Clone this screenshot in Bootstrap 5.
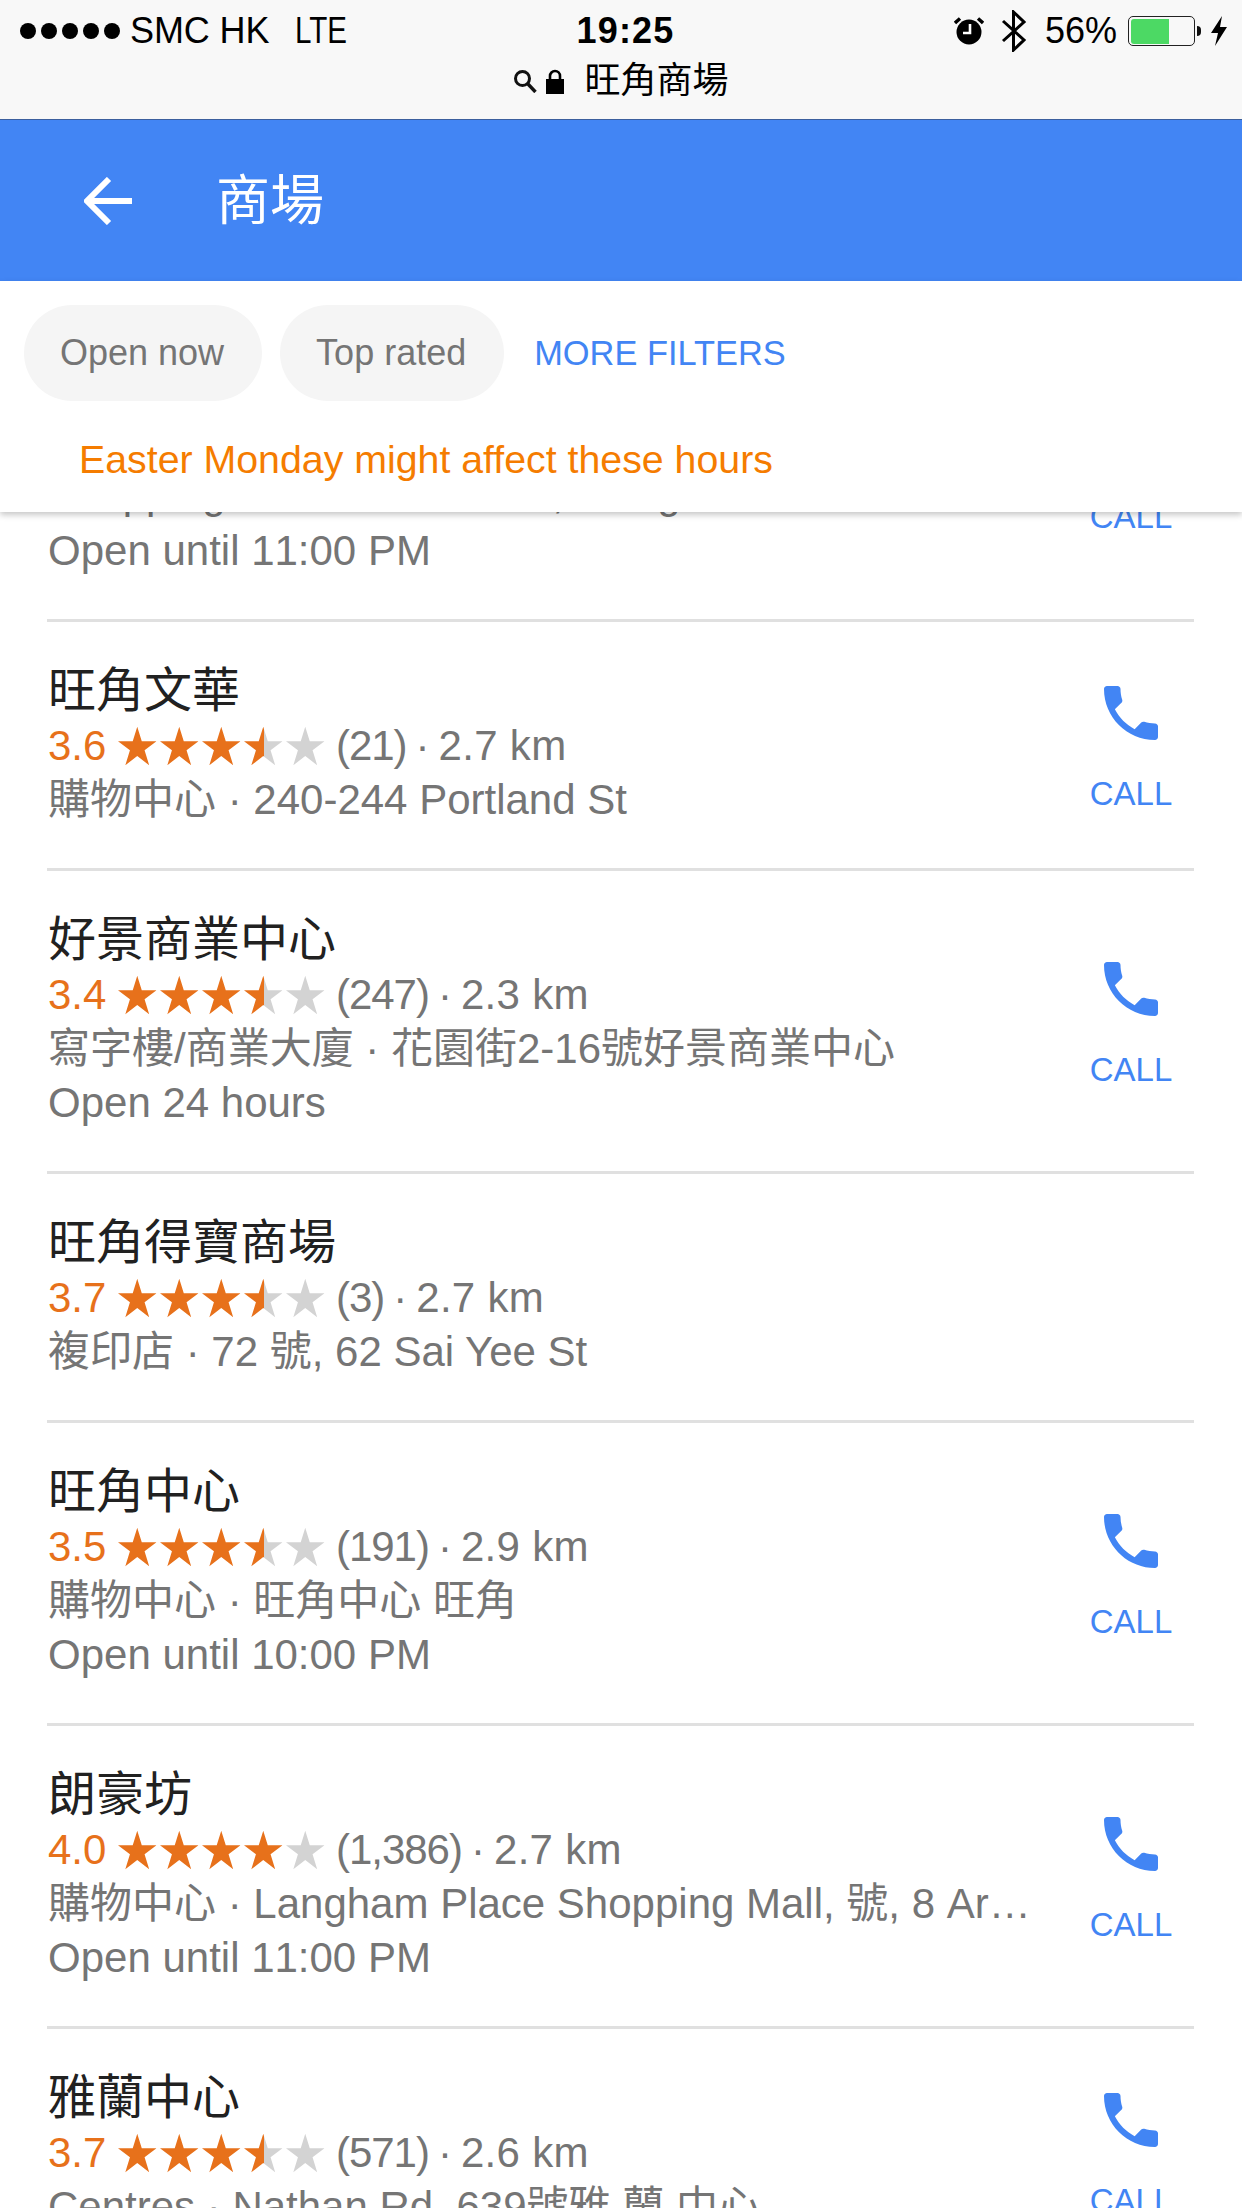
<!DOCTYPE html>
<html lang="zh-Hant">
<head>
<meta charset="utf-8">
<title>商場</title>
<link href="https://cdn.jsdelivr.net/npm/bootstrap@5.3.0/dist/css/bootstrap.min.css" rel="stylesheet">
<style>
html,body{margin:0;background:#fff}
.phone-screen{width:1242px;height:2208px;overflow:hidden;font-family:"Liberation Sans","Noto Sans CJK TC",sans-serif;color:#757575;background:#fff}
.ios-bar{height:120px;background:#f8f8f8;border-bottom:1px solid #3b5f9e;color:#000;font-size:36px;line-height:40px}
.ios-top{height:62px;padding:0 0 0 20px}
.ios-side{flex:1 1 0;min-width:0}
.ios-dot{width:16px;height:16px;border-radius:50%;background:#000;margin-right:5px}
.ios-carrier{margin-left:5px;letter-spacing:-.1px}
.ios-net{margin-left:26px;display:inline-block;transform:scaleX(.82);transform-origin:left center}
.ios-time{font-weight:700;letter-spacing:1.2px;margin-left:3px}
.ios-right{padding-right:14px}
.ios-bt{margin-left:16px}
.ios-pct{margin-left:18px}
.alarm-shift{margin-right:.5px}
.batt{width:67px;height:30px;border:1.5px solid #222;border-radius:5px;padding:1.5px;margin-left:11px}
.batt-fill{width:38px;height:100%;background:#4cd964;border-radius:3px 0 0 3px}
.batt-nub{width:4px;height:10px;background:#111;border-radius:0 4px 4px 0;margin:0 9px 0 2px}
.ios-url{height:40px;margin-top:-1px;line-height:40px;padding-right:3px}
.url-text{margin-left:20px;width:142px;white-space:nowrap}
.app-head{height:161px;background:#4285f4;color:#fff;padding-left:84px}
.app-title{font-size:54px;margin-left:84px;line-height:60px}
.filter-panel{height:231px;background:#fff;box-shadow:0 3px 6px rgba(0,0,0,.22);position:relative;z-index:2;padding:24px 0 0 24px}
.chip-row{gap:18px}
.chip-pill{height:96px;border-radius:48px;background:#f5f5f5;color:#757575;font-size:36px;line-height:96px;padding:0 38px 0 36px}
.more-link{font-size:34.4px;color:#4285f4;text-decoration:none;margin-left:12px;line-height:92px;white-space:nowrap}
.notice-text{font-size:39.3px;color:#f57c00;line-height:44px;margin:36px 0 0 55px;white-space:nowrap}
.place-list{margin-top:-48px;border-radius:0}
.place-list .place-row{margin:0 48px 0 47px;padding:41px 0 41px;border:0;border-bottom:3px solid #e0e0e0;border-radius:0;color:#757575;font-size:42px;line-height:54px;background:#fff}
.place-list .place-peek{padding-top:0}
.peek-line{line-height:60px}
.place-main{flex:1 1 0;min-width:0;padding:0 20px 0 1px}
.place-name{font-size:48px;line-height:56px;color:#212121;white-space:nowrap}
.place-score{color:#e7711b}
.place-stars{margin:0 11px 0 12px;gap:3.5px}
.place-stars svg{display:block;width:38.5px;height:40px}
.place-count{letter-spacing:-1px}
.mid-dot{margin:0 9px}
.place-dist{letter-spacing:.3px}
.place-meta{white-space:nowrap;font-kerning:none}
.call-box{width:130px;margin-right:-2px;color:#4285f4;font-size:33px;line-height:40px;text-decoration:none}
.call-box svg{display:block;width:72px;height:72px;margin:0 0 25px}
.call-peek{margin-bottom:41px}
</style>
</head>
<body>
<svg width="0" height="0" class="d-block position-absolute" aria-hidden="true">
  <defs>
    <linearGradient id="halfgrad" x1="0" x2="1" y1="0" y2="0">
      <stop offset=".52" stop-color="#e7711b"/><stop offset=".52" stop-color="#d3d3d3"/>
    </linearGradient>
    <symbol id="st-full" viewBox="0 0 40 40"><polygon fill="#e7711b" points="20,0 24.7,15 40,15 27.6,24.5 32.4,40 20,30.5 7.6,40 12.4,24.5 0,15 15.3,15"/></symbol>
    <symbol id="st-half" viewBox="0 0 40 40"><polygon fill="url(#halfgrad)" points="20,0 24.7,15 40,15 27.6,24.5 32.4,40 20,30.5 7.6,40 12.4,24.5 0,15 15.3,15"/></symbol>
    <symbol id="st-none" viewBox="0 0 40 40"><polygon fill="#d3d3d3" points="20,0 24.7,15 40,15 27.6,24.5 32.4,40 20,30.5 7.6,40 12.4,24.5 0,15 15.3,15"/></symbol>
    <symbol id="ph" viewBox="0 0 24 24"><path fill="#4285f4" d="M6.62 10.79c1.44 2.83 3.76 5.14 6.59 6.59l2.2-2.2c.27-.27.67-.36 1.02-.24 1.12.37 2.33.57 3.57.57.55 0 1 .45 1 1V20c0 .55-.45 1-1 1-9.39 0-17-7.61-17-17 0-.55.45-1 1-1h3.5c.55 0 1 .45 1 1 0 1.25.2 2.45.57 3.57.11.35.03.74-.25 1.02l-2.2 2.2z"/></symbol>
  </defs>
</svg>
<div class="phone-screen">
  <div class="ios-bar">
    <div class="ios-top d-flex align-items-center">
      <div class="ios-side d-flex align-items-center">
        <span class="ios-dot"></span><span class="ios-dot"></span><span class="ios-dot"></span><span class="ios-dot"></span><span class="ios-dot"></span>
        <span class="ios-carrier">SMC HK</span><span class="ios-net">LTE</span>
      </div>
      <div class="ios-time">19:25</div>
      <div class="ios-side ios-right d-flex align-items-center justify-content-end">
        <svg class="alarm-shift" width="30" height="28" viewBox="0 0 30 28"><circle cx="15" cy="15" r="12.5" fill="#000"/><path d="M1 6 L6 1.5 M29 6 L24 1.5" stroke="#000" stroke-width="3.4"/><path d="M16 7v9h-7" fill="none" stroke="#fff" stroke-width="2.6"/></svg>
        <svg class="ios-bt" width="26" height="42" viewBox="0 0 26 42"><path d="M2 11 L23 30 L12.5 40 V2 L23 12 L2 31" fill="none" stroke="#000" stroke-width="3"/></svg>
        <span class="ios-pct">56%</span>
        <div class="batt"><div class="batt-fill"></div></div>
        <div class="batt-nub"></div>
        <svg width="18" height="30" viewBox="0 0 18 30"><polygon fill="#000" points="12,0 1,17 8,17 5,30 17,11 10,11"/></svg>
      </div>
    </div>
    <div class="ios-url d-flex align-items-center justify-content-center">
      <svg width="24" height="24" viewBox="0 0 24 24"><circle cx="9.5" cy="9.5" r="7" fill="none" stroke="#111" stroke-width="3"/><path d="M14.5 14.5 L22.5 23" stroke="#111" stroke-width="3.4"/></svg>
      <svg class="ms-2" width="20" height="25" viewBox="0 0 20 25"><rect x="1" y="10" width="18" height="15" fill="#000"/><path d="M5 11V7a5 5 0 0 1 10 0v4" fill="none" stroke="#000" stroke-width="2.6"/></svg>
      <span class="url-text">旺角商場</span>
    </div>
  </div>

  <div class="app-head d-flex align-items-center">
    <svg width="48" height="48" viewBox="0 0 48 48"><path d="M48 24H4M25 2 3 24l22 22" fill="none" stroke="#fff" stroke-width="6"/></svg>
    <span class="app-title">商場</span>
  </div>

  <div class="filter-panel">
    <div class="chip-row d-flex align-items-center">
      <span class="chip-pill">Open now</span>
      <span class="chip-pill">Top rated</span>
      <a class="more-link" href="#">MORE FILTERS</a>
    </div>
    <div class="notice-text">Easter Monday might affect these hours</div>
  </div>

  <div class="place-list list-group list-group-flush">
    <div class="place-row place-peek list-group-item d-flex">
      <div class="place-main">
        <div class="peek-line text-truncate">Shopping mall · Nathan Rd, Mong Kok</div>
        <div class="place-meta">Open until 11:00 PM</div>
      </div>
      <a class="call-box call-peek d-flex flex-column align-items-center align-self-end" href="#">CALL</a>
    </div>

    <div class="place-row list-group-item d-flex align-items-center">
      <div class="place-main">
        <div class="place-name">旺角文華</div>
        <div class="d-flex align-items-center"><span class="place-score">3.6</span><span class="place-stars d-flex"><svg><use href="#st-full"/></svg><svg><use href="#st-full"/></svg><svg><use href="#st-full"/></svg><svg><use href="#st-half"/></svg><svg><use href="#st-none"/></svg></span><span class="place-count">(21)</span><span class="mid-dot">·</span><span class="place-dist">2.7 km</span></div>
        <div class="text-truncate">購物中心 · 240-244 Portland St</div>
      </div>
      <a class="call-box d-flex flex-column align-items-center" href="#"><svg><use href="#ph"/></svg>CALL</a>
    </div>

    <div class="place-row list-group-item d-flex align-items-center">
      <div class="place-main">
        <div class="place-name">好景商業中心</div>
        <div class="d-flex align-items-center"><span class="place-score">3.4</span><span class="place-stars d-flex"><svg><use href="#st-full"/></svg><svg><use href="#st-full"/></svg><svg><use href="#st-full"/></svg><svg><use href="#st-half"/></svg><svg><use href="#st-none"/></svg></span><span class="place-count">(247)</span><span class="mid-dot">·</span><span class="place-dist">2.3 km</span></div>
        <div class="text-truncate">寫字樓/商業大廈 · 花園街2-16號好景商業中心</div>
        <div class="place-meta">Open 24 hours</div>
      </div>
      <a class="call-box d-flex flex-column align-items-center" href="#"><svg><use href="#ph"/></svg>CALL</a>
    </div>

    <div class="place-row list-group-item d-flex align-items-center">
      <div class="place-main">
        <div class="place-name">旺角得寶商場</div>
        <div class="d-flex align-items-center"><span class="place-score">3.7</span><span class="place-stars d-flex"><svg><use href="#st-full"/></svg><svg><use href="#st-full"/></svg><svg><use href="#st-full"/></svg><svg><use href="#st-half"/></svg><svg><use href="#st-none"/></svg></span><span class="place-count">(3)</span><span class="mid-dot">·</span><span class="place-dist">2.7 km</span></div>
        <div class="text-truncate">複印店 · 72 號, 62 Sai Yee St</div>
      </div>
    </div>

    <div class="place-row list-group-item d-flex align-items-center">
      <div class="place-main">
        <div class="place-name">旺角中心</div>
        <div class="d-flex align-items-center"><span class="place-score">3.5</span><span class="place-stars d-flex"><svg><use href="#st-full"/></svg><svg><use href="#st-full"/></svg><svg><use href="#st-full"/></svg><svg><use href="#st-half"/></svg><svg><use href="#st-none"/></svg></span><span class="place-count">(191)</span><span class="mid-dot">·</span><span class="place-dist">2.9 km</span></div>
        <div class="text-truncate">購物中心 · 旺角中心 旺角</div>
        <div class="place-meta">Open until 10:00 PM</div>
      </div>
      <a class="call-box d-flex flex-column align-items-center" href="#"><svg><use href="#ph"/></svg>CALL</a>
    </div>

    <div class="place-row list-group-item d-flex align-items-center">
      <div class="place-main">
        <div class="place-name">朗豪坊</div>
        <div class="d-flex align-items-center"><span class="place-score">4.0</span><span class="place-stars d-flex"><svg><use href="#st-full"/></svg><svg><use href="#st-full"/></svg><svg><use href="#st-full"/></svg><svg><use href="#st-full"/></svg><svg><use href="#st-none"/></svg></span><span class="place-count">(1,386)</span><span class="mid-dot">·</span><span class="place-dist">2.7 km</span></div>
        <div class="text-truncate">購物中心 · Langham Place Shopping Mall, 號, 8 Argyle St</div>
        <div class="place-meta">Open until 11:00 PM</div>
      </div>
      <a class="call-box d-flex flex-column align-items-center" href="#"><svg><use href="#ph"/></svg>CALL</a>
    </div>

    <div class="place-row list-group-item d-flex align-items-center">
      <div class="place-main">
        <div class="place-name">雅蘭中心</div>
        <div class="d-flex align-items-center"><span class="place-score">3.7</span><span class="place-stars d-flex"><svg><use href="#st-full"/></svg><svg><use href="#st-full"/></svg><svg><use href="#st-full"/></svg><svg><use href="#st-half"/></svg><svg><use href="#st-none"/></svg></span><span class="place-count">(571)</span><span class="mid-dot">·</span><span class="place-dist">2.6 km</span></div>
        <div class="text-truncate">Centres · Nathan Rd, 639號雅 蘭 中心</div>
      </div>
      <a class="call-box d-flex flex-column align-items-center" href="#"><svg><use href="#ph"/></svg>CALL</a>
    </div>
  </div>
</div>
<script src="https://cdn.jsdelivr.net/npm/bootstrap@5.3.0/dist/js/bootstrap.bundle.min.js"></script>
</body>
</html>
